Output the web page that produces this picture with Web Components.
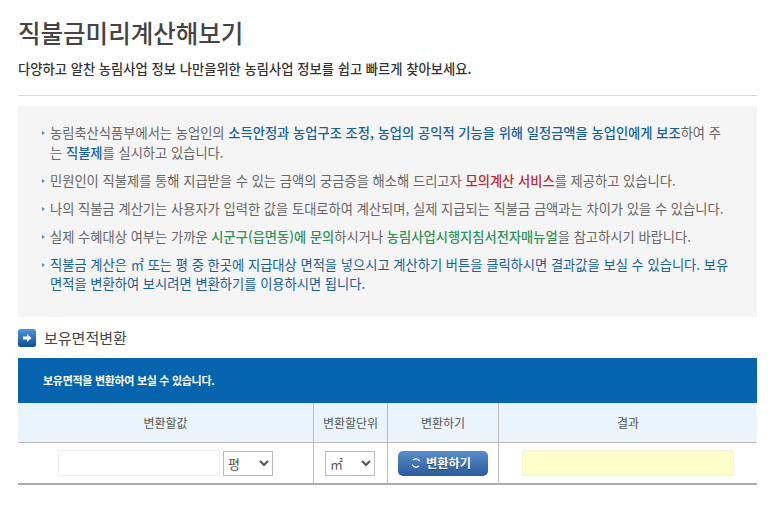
<!DOCTYPE html>
<html lang="ko">
<head>
<meta charset="utf-8">
<title>직불금미리계산해보기</title>
<style>
  html, body { margin: 0; padding: 0; background: #fff; }
  body { font-family: "Noto Sans CJK KR", "Noto Sans", sans-serif; overflow: hidden; }
</style>
</head>
<body>
<calc-page>
  <page-title heading="직불금미리계산해보기">다양하고 알찬 농림사업 정보 나만을위한 농림사업 정보를 쉽고 빠르게 찾아보세요.</page-title>
  <info-box>
    <info-item>농림축산식품부에서는 농업인의 <b class="blue">소득안정과 농업구조 조정, 농업의 공익적 기능을 위해 일정금액을 농업인에게 보조</b>하여 주는 <b class="blue">직불제</b>를 실시하고 있습니다.</info-item>
    <info-item>민원인이 직불제를 통해 지급받을 수 있는 금액의 궁금증을 해소해 드리고자 <b class="red">모의계산 서비스</b>를 제공하고 있습니다.</info-item>
    <info-item>나의 직불금 계산기는 사용자가 입력한 값을 토대로하여 계산되며, 실제 지급되는 직불금 금액과는 차이가 있을 수 있습니다.</info-item>
    <info-item>실제 수혜대상 여부는 가까운 <b class="green">시군구(읍면동)에 문의</b>하시거나 <b class="green">농림사업시행지침서전자매뉴얼</b>을 참고하시기 바랍니다.</info-item>
    <info-item class="note">직불금 계산은 ㎡ 또는 평 중 한곳에 지급대상 면적을 넣으시고 계산하기 버튼을 클릭하시면 결과값을 보실 수 있습니다. 보유면적을 변환하여 보시려면 변환하기를 이용하시면 됩니다.</info-item>
  </info-box>
  <section-heading>보유면적변환</section-heading>
  <convert-table caption="보유면적을 변환하여 보실 수 있습니다."></convert-table>
</calc-page>

<template id="tpl-page">
  <style>
    :host { display: block; padding: 0 11px 0 18px; }
  </style>
  <slot></slot>
</template>

<template id="tpl-title">
  <style>
    :host { display: block; height: 96px; box-sizing: border-box; border-bottom: 1px solid #d9d9d9; margin-bottom: 10px; padding-top: 15px; }
    h1 { margin: 0; font-size: 24.5px; line-height: 36px; font-weight: 500; color: #444; }
    p { margin: 8px 0 0; font-size: 13.3px; line-height: 20px; font-weight: 500; color: #333; }
  </style>
  <h1></h1>
  <p><slot></slot></p>
</template>

<template id="tpl-box">
  <style>
    :host { display: flex; flex-direction: column; gap: 9px; background: #f5f5f5; height: 211px; box-sizing: border-box; padding: 17px 27px 0 24px; }
    ::slotted(.note) { color: #17609c; }
    ::slotted(:first-child) { line-height: 20px; margin-bottom: -1px; }
  </style>
  <slot></slot>
</template>

<template id="tpl-item">
  <style>
    :host { display: block; position: relative; padding-left: 8px; font-size: 13.28px; line-height: 19px; color: #666; }
    :host::before { content: ""; position: absolute; left: 0; top: 8px; border-left: 3px solid #5b8fb5; border-top: 2.5px solid transparent; border-bottom: 2.5px solid transparent; }
  </style>
  <slot></slot>
</template>

<template id="tpl-heading">
  <style>
    :host { display: flex; align-items: center; gap: 8px; height: 41px; box-sizing: border-box; font-size: 15px; font-weight: 400; color: #444; }
    svg { flex: none; }
  </style>
  <svg width="18" height="18" viewBox="0 0 18 18">
    <defs><linearGradient id="g" x1="0" y1="0" x2="0" y2="1"><stop offset="0" stop-color="#4d97d8"/><stop offset="1" stop-color="#0f4f96"/></linearGradient></defs>
    <rect width="18" height="18" rx="2.5" fill="url(#g)"/>
    <path d="M5 7.5h4V5l4.5 4L9 13v-2.5H5z" fill="#fff"/>
  </svg>
  <span><slot></slot></span>
</template>

<template id="tpl-table">
  <style>
    :host { display: block; font-size: 12px; color: #555; }
    .caption { height: 45px; box-sizing: border-box; padding: 0 0 2px 25px; display: flex; align-items: center; background: #0663ad; color: #fff; font-weight: 700; font-size: 11px; letter-spacing: -0.3px; }
    .grid { display: grid; grid-template-columns: 295px 74px 111px 259px; grid-template-rows: 40px 40px; border-bottom: 2px solid #aaa; }
    .th, .td { display: flex; align-items: center; justify-content: center; border-left: 1px solid #bbb; box-sizing: border-box; }
    .th { background: #e9f4fc; border-bottom: 1px solid #bbb; }
    .first { border-left: 0; }
    .td { gap: 3px; }
    input { width: 162px; height: 26px; box-sizing: border-box; border: 1px solid #eee; background: #fff; padding: 0; margin: 0; outline: 0; }
    input.result { width: 212px; background: #ffffcc; border-color: #f3f3d8; }
    select { height: 25px; box-sizing: border-box; border: 1px solid #bbb; background: #fff; color: #555; font: 13px "Noto Sans CJK KR", sans-serif; margin: 0; padding: 0; }
    .unit1 { width: 50px; }
    .unit2 { width: 50px; margin-right: 1px; }
    button { width: 90px; height: 25px; border: 0; border-radius: 5px; padding: 0 4px 0 0; background: linear-gradient(#5a8dcc, #2a5b9b); color: #fff; font: 700 12.2px "Noto Sans CJK KR", sans-serif; display: flex; align-items: center; justify-content: center; gap: 5px; text-shadow: 0 1px 1px rgba(0,0,0,.35); }
  </style>
  <div class="caption"></div>
  <div class="grid">
    <div class="th first">변환할값</div>
    <div class="th">변환할단위</div>
    <div class="th">변환하기</div>
    <div class="th">결과</div>
    <div class="td first">
      <input type="text" aria-label="변환할값">
      <select class="unit1" aria-label="단위"><option>평</option><option>㎡</option></select>
    </div>
    <div class="td">
      <select class="unit2" aria-label="변환할단위"><option>㎡</option><option>평</option></select>
    </div>
    <div class="td">
      <button type="button">
        <svg width="10" height="10" viewBox="0 0 10 10" fill="none" stroke="#fff" stroke-width="1.2"><path d="M8.6 3.4A4 4 0 0 0 2 2"/><path d="M1.4 6.6A4 4 0 0 0 8 8"/></svg>
        변환하기
      </button>
    </div>
    <div class="td"><input class="result" type="text" readonly aria-label="결과"></div>
  </div>
</template>

<script>
  // small helper, every element just clones its own template
  function stamp(el, id) {
    const root = el.attachShadow({ mode: 'open' });
    root.appendChild(document.getElementById(id).content.cloneNode(true));
    return root;
  }

  class CalcPage extends HTMLElement {
    constructor() { super(); stamp(this, 'tpl-page'); }
  }
  class PageTitle extends HTMLElement {
    constructor() { super(); stamp(this, 'tpl-title'); }
    connectedCallback() {
      this.shadowRoot.querySelector('h1').textContent = this.getAttribute('heading');
    }
  }
  class InfoBox extends HTMLElement {
    constructor() { super(); stamp(this, 'tpl-box'); }
  }
  class InfoItem extends HTMLElement {
    constructor() { super(); stamp(this, 'tpl-item'); }
  }
  class SectionHeading extends HTMLElement {
    constructor() { super(); stamp(this, 'tpl-heading'); }
  }
  class ConvertTable extends HTMLElement {
    constructor() { super(); stamp(this, 'tpl-table'); }
    connectedCallback() {
      this.shadowRoot.querySelector('.caption').textContent = this.getAttribute('caption');
    }
  }

  customElements.define('calc-page', CalcPage);
  customElements.define('page-title', PageTitle);
  customElements.define('info-box', InfoBox);
  customElements.define('info-item', InfoItem);
  customElements.define('section-heading', SectionHeading);
  customElements.define('convert-table', ConvertTable);
</script>
<style>
  /* inline spans live in the light DOM so the page rules reach them */
  info-item b { font-weight: 500; }
  .blue { color: #17609c; }
  .red { color: #c0272d; }
  .green { color: #2f9257; }
</style>
</body>
</html>
